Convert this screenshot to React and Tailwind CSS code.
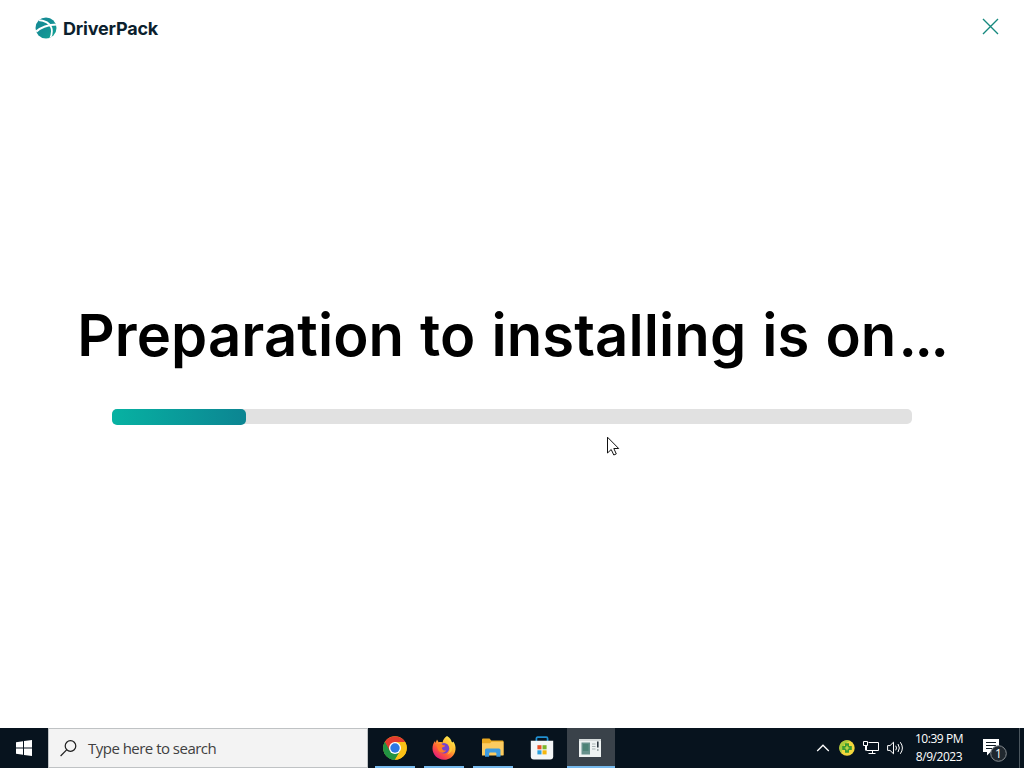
import React from 'react';
import { clsx } from 'clsx';

const PROGRESS = 16.75;

function DriverPackLogo() {
  return (
    <svg width="22" height="22" viewBox="0 0 22 22">
      <defs>
        <linearGradient id="globe" x1="0" y1="0" x2="1" y2="1">
          <stop offset="0" stopColor="#168995" />
          <stop offset="0.5" stopColor="#138f94" />
          <stop offset="1" stopColor="#12a594" />
        </linearGradient>
        <clipPath id="disc"><circle cx="11" cy="11" r="10.5" /></clipPath>
      </defs>
      <circle cx="11" cy="11" r="10.5" fill="url(#globe)" />
      <g clipPath="url(#disc)" fill="none" stroke="#fff">
        <path d="M-1 16.5C5 10 13 7.2 23 7.4" strokeWidth="2" />
        <path d="M3.5 3C10 3.6 14.6 6 16.3 10.5C17.6 14.2 17 18 14.6 23" strokeWidth="1.8" />
      </g>
    </svg>
  );
}

function Cursor() {
  return (
    <svg className="absolute left-[607px] top-[436px]" width="13" height="20" viewBox="0 0 13 20">
      <path d="M0.5 1.2V17L4.2 13.5L6.8 19L9.3 17.9L6.8 12.5H11.7Z" fill="#fff" stroke="#111" strokeWidth="1" />
    </svg>
  );
}

function ChromeIcon() {
  return (
    <svg width="24" height="24" viewBox="0 0 24 24">
      <circle cx="12" cy="12" r="11.8" fill="#fbc116" />
      <path d="M12 12L1.8 6.1A11.8 11.8 0 0 0 12 23.8L17.2 15Z" fill="#229342" />
      <path d="M12 12L22.2 6.1A11.8 11.8 0 0 1 12 23.8L17.2 15Z" fill="#fbc116" />
      <path d="M6.8 15L1.8 6.1A11.8 11.8 0 0 1 22.2 6.1H12Z" fill="#e33b2e" />
      <path d="M1.8 6.1L6.8 15L12 18L12 23.8A11.8 11.8 0 0 1 1.8 6.1Z" fill="#229342" />
      <circle cx="12" cy="12" r="6" fill="#fff" />
      <circle cx="12" cy="12" r="4.7" fill="#2b78e4" />
    </svg>
  );
}

function FirefoxIcon() {
  return (
    <svg width="24" height="24" viewBox="0 0 24 24">
      <defs>
        <linearGradient id="fox" x1="0.85" y1="0.1" x2="0.2" y2="0.95">
          <stop offset="0" stopColor="#fff04f" />
          <stop offset="0.38" stopColor="#ffb02e" />
          <stop offset="0.66" stopColor="#ff5a38" />
          <stop offset="1" stopColor="#e2187c" />
        </linearGradient>
      </defs>
      <path d="M15 0C18.3 2 19.2 4.2 19.8 6C21 6.6 21.3 5.9 21.2 5.2C23 7.8 23.8 10.5 23.5 13.4C22.9 19.4 18 23.8 12 23.8C5.6 23.8.5 18.8.5 12.6C.5 9.4 1.5 7 3 5L3.5 7L5 3.6L6.6 6.2C8 5.8 9.4 5.9 10.5 6.4C11.1 4 12.6 1.4 15 0Z" fill="url(#fox)" />
      <circle cx="12" cy="12.2" r="5.2" fill="#7542cf" />
      <path d="M4.4 8.8C7 7.3 9.3 7.6 11.2 9.2C12.8 9.1 13.2 9.7 13 10.3L9.9 11.7C10 14.1 12.2 15.2 14.3 14.2C12.9 17.3 8 17.7 6.2 14.3Z" fill="#ff7b27" />
      <path d="M14.6 7C18.8 9.4 18.9 15.5 15.2 18.4C20 17 21.8 12 19.3 8C18 6.2 15.5 5.2 15 2C13.8 3.8 13.7 5.6 14.6 7Z" fill="#ffc83a" />
    </svg>
  );
}

function ExplorerIcon() {
  return (
    <svg width="24" height="20" viewBox="0 0 24 20">
      <path d="M1 1.5Q1 .5 2 .5H8.5L10.3 2.5H21.5Q22.5 2.5 22.5 3.5V17H1Z" fill="#e9a820" />
      <path d="M1 5.2H9L10.5 3.8H22.5V17.5H1Z" fill="#fbcb60" />
      <path d="M4 18.8V12Q4 10.5 5.5 10.5H18Q19.5 10.5 19.5 12V18.8H15.4V15.5Q15.4 14.5 14.4 14.5H9.1Q8.1 14.5 8.1 15.5V18.8Z" fill="#3d9be0" />
    </svg>
  );
}

function StoreIcon() {
  return (
    <svg width="24" height="24" viewBox="0 0 24 24">
      <path d="M6.4 6V2.5Q6.4 1.2 7.7 1.2H16.3Q17.6 1.2 17.6 2.5V6" fill="none" stroke="#2190d1" strokeWidth="1.7" />
      <path d="M.8 4.8H23.2V20.5Q23.2 23.5 20.2 23.5H3.8Q.8 23.5 .8 20.5Z" fill="#f4f6f7" />
      <path d="M7.4 9.2H11.5V13.3H7.4Z" fill="#eb5125" />
      <path d="M12.5 9.2H16.6V13.3H12.5Z" fill="#7db52b" />
      <path d="M7.4 14.3H11.5V18.4H7.4Z" fill="#2ba0dd" />
      <path d="M12.5 14.3H16.6V18.4H12.5Z" fill="#f5b60c" />
    </svg>
  );
}

function InstallerIcon() {
  return (
    <svg className="mr-[2px]" width="22" height="18" viewBox="0 0 22 18">
      <path d="M0 0H22V18H0Z" fill="#eef2f2" />
      <path d="M0 0H22V2H0Z" fill="#d5dada" />
      <path d="M2.5 3.5H11V15.5H2.5Z" fill="#67918c" />
      <path d="M4 5H9.5V12H4Z" fill="#4d8377" />
      <path d="M13 5H16.5M13 7.5H16.5M13 10H16.5" stroke="#a9b4b4" />
      <path d="M18.8 2.5V8.5" stroke="#2c3840" strokeWidth="1.6" />
      <path d="M18.8 10V12" stroke="#9ba7a7" strokeWidth="1.5" />
    </svg>
  );
}

const APPS = [
  { id: 'chrome', icon: ChromeIcon, running: true },
  { id: 'firefox', icon: FirefoxIcon, running: true },
  { id: 'explorer', icon: ExplorerIcon, running: true },
  { id: 'store', icon: StoreIcon },
  { id: 'installer', icon: InstallerIcon, running: true, active: true },
];

function Tray() {
  return (
    <div className="ml-auto flex h-full items-center text-white">
      <svg className="mr-[9px]" width="14" height="8" viewBox="0 0 14 8">
        <path d="M1.2 7L7 1.2L12.8 7" fill="none" stroke="#fff" strokeWidth="1.3" />
      </svg>
      <svg className="mr-[8px]" width="16" height="16" viewBox="0 0 16 16">
        <circle cx="8" cy="8" r="7.7" fill="#f2d63c" />
        <path d="M2.5 13.4A7.7 7.7 0 0 1 11.5 1.1C7 2 3 6 2.5 13.4Z" fill="#a9cc3b" />
        <path d="M6 3.2H10V6H12.8V10H10V12.8H6V10H3.2V6H6Z" fill="#3c9c31" />
        <path d="M8 5.8V10.2M5.8 8H10.2" stroke="#d9e04c" strokeWidth="1.2" />
      </svg>
      <svg className="mr-[8px]" width="16" height="14" viewBox="0 0 16 14" fill="none" stroke="#fff">
        <path d="M5.5 1.5H15.5V9.5H3.5V5" />
        <path d="M.5 .5H4.5V4.5H.5ZM2.5 4.5V9.5M9.5 9.5V12.5M5.5 12.5H12.5" />
      </svg>
      <svg className="mr-[9px]" width="18" height="14" viewBox="0 0 18 14" fill="none" stroke="#fff">
        <path d="M.6 4.6H3L6.5 1.2V12.8L3 9.4H.6Z" />
        <path d="M8.7 4.7Q10.3 7 8.7 9.3M11 3Q13.7 7 11 11M13.3 1.2Q17.5 7 13.3 12.8" />
      </svg>
      <div className="w-[50px] text-center font-['Open_Sans',sans-serif] text-[12px] leading-[18px] tracking-[-0.45px] whitespace-nowrap">
        <div>10:39 PM</div>
        <div>8/9/2023</div>
      </div>
      <svg className="ml-[18px] mt-[4px]" width="26" height="26" viewBox="0 0 26 26">
        <path d="M1 2H17V15H8.5L5 18.5V15H1Z" fill="#fff" />
        <path d="M4 5.5H14M4 8.5H14M4 11.5H10" stroke="#101b24" />
        <circle cx="16.5" cy="16.5" r="7.8" fill="#20282f" stroke="#858b90" />
        <text x="16.5" y="21" textAnchor="middle" fontSize="12" fill="#fff" fontFamily="Open Sans">1</text>
      </svg>
      <div className="ml-[11px] h-full w-[5px] border-l border-[#4b565e]" />
    </div>
  );
}

function Taskbar() {
  return (
    <footer className="flex h-10 items-center bg-[#07131e]">
      <div className="flex h-full w-12 items-center justify-center">
        <svg width="16" height="16" viewBox="0 0 16 16" fill="#fff">
          <path d="M0 2.2L7 1.2V7.5H0ZM8 1.1L16 0V7.5H8ZM0 8.5H7V14.8L0 13.8ZM8 8.5H16V16L8 14.9Z" />
        </svg>
      </div>
      <div className="flex h-full w-80 items-center border border-[#bfc2c4] bg-[#f3f3f3] pl-[11px]">
        <svg width="17" height="17" viewBox="0 0 17 17" fill="none" stroke="#1d1d1d" strokeWidth="1.2">
          <circle cx="10.5" cy="6" r="5.3" />
          <path d="M6.6 9.9L.6 16" />
        </svg>
        <span className="ml-[11px] font-['Open_Sans',sans-serif] text-[15px] tracking-[-0.52px] whitespace-nowrap text-[#404040]">Type here to search</span>
      </div>
      <div className="ml-[3px] flex h-full gap-px">
        {APPS.map(({ id, icon: Icon, running, active }) => (
          <div key={id} className={clsx('relative flex h-full w-12 items-center justify-center', active && 'bg-[#3a424a]')}>
            <Icon />
            {running && (
              <div className={clsx('absolute bottom-0 h-[2px] bg-[#76b9ed]', active ? 'inset-x-0' : 'inset-x-1')} />
            )}
          </div>
        ))}
      </div>
      <Tray />
    </footer>
  );
}

export default function App() {
  return (
    <div className="relative flex h-screen w-full flex-col overflow-hidden bg-white font-['Inter',sans-serif]">
      <header className="flex h-14 items-center justify-between pr-[25px] pl-[35px]">
        <div className="flex items-center gap-[6px]">
          <DriverPackLogo />
          <span className="mt-px text-[18px] leading-none font-bold tracking-[-0.2px] text-[#0c1f2e]">DriverPack</span>
        </div>
        <button className="mb-[3px]">
          <svg width="17" height="17" viewBox="0 0 17 17" fill="none" stroke="#16897e" strokeWidth="1.4">
            <path d="M1 1L16 16M16 1L1 16" />
          </svg>
        </button>
      </header>

      <main className="flex flex-1 flex-col items-center pt-[243px]">
        <h1 className="text-[58px] leading-[72px] font-semibold tracking-[0.1px] [word-spacing:1.2px] whitespace-nowrap text-black">
          Preparation to installing is on<span className="ml-[2px] tracking-[-2.4px]">...</span>
        </h1>
        <div className="mt-[38px] h-[15px] w-[800px] rounded-[5px] bg-[#e1e1e1]">
          <div
            className="h-4 rounded-[5px] bg-linear-to-r from-[#07b2a2] to-[#0c8592]"
            style={{ width: `${PROGRESS}%` }}
          />
        </div>
      </main>

      <Taskbar />
      <Cursor />
    </div>
  );
}
